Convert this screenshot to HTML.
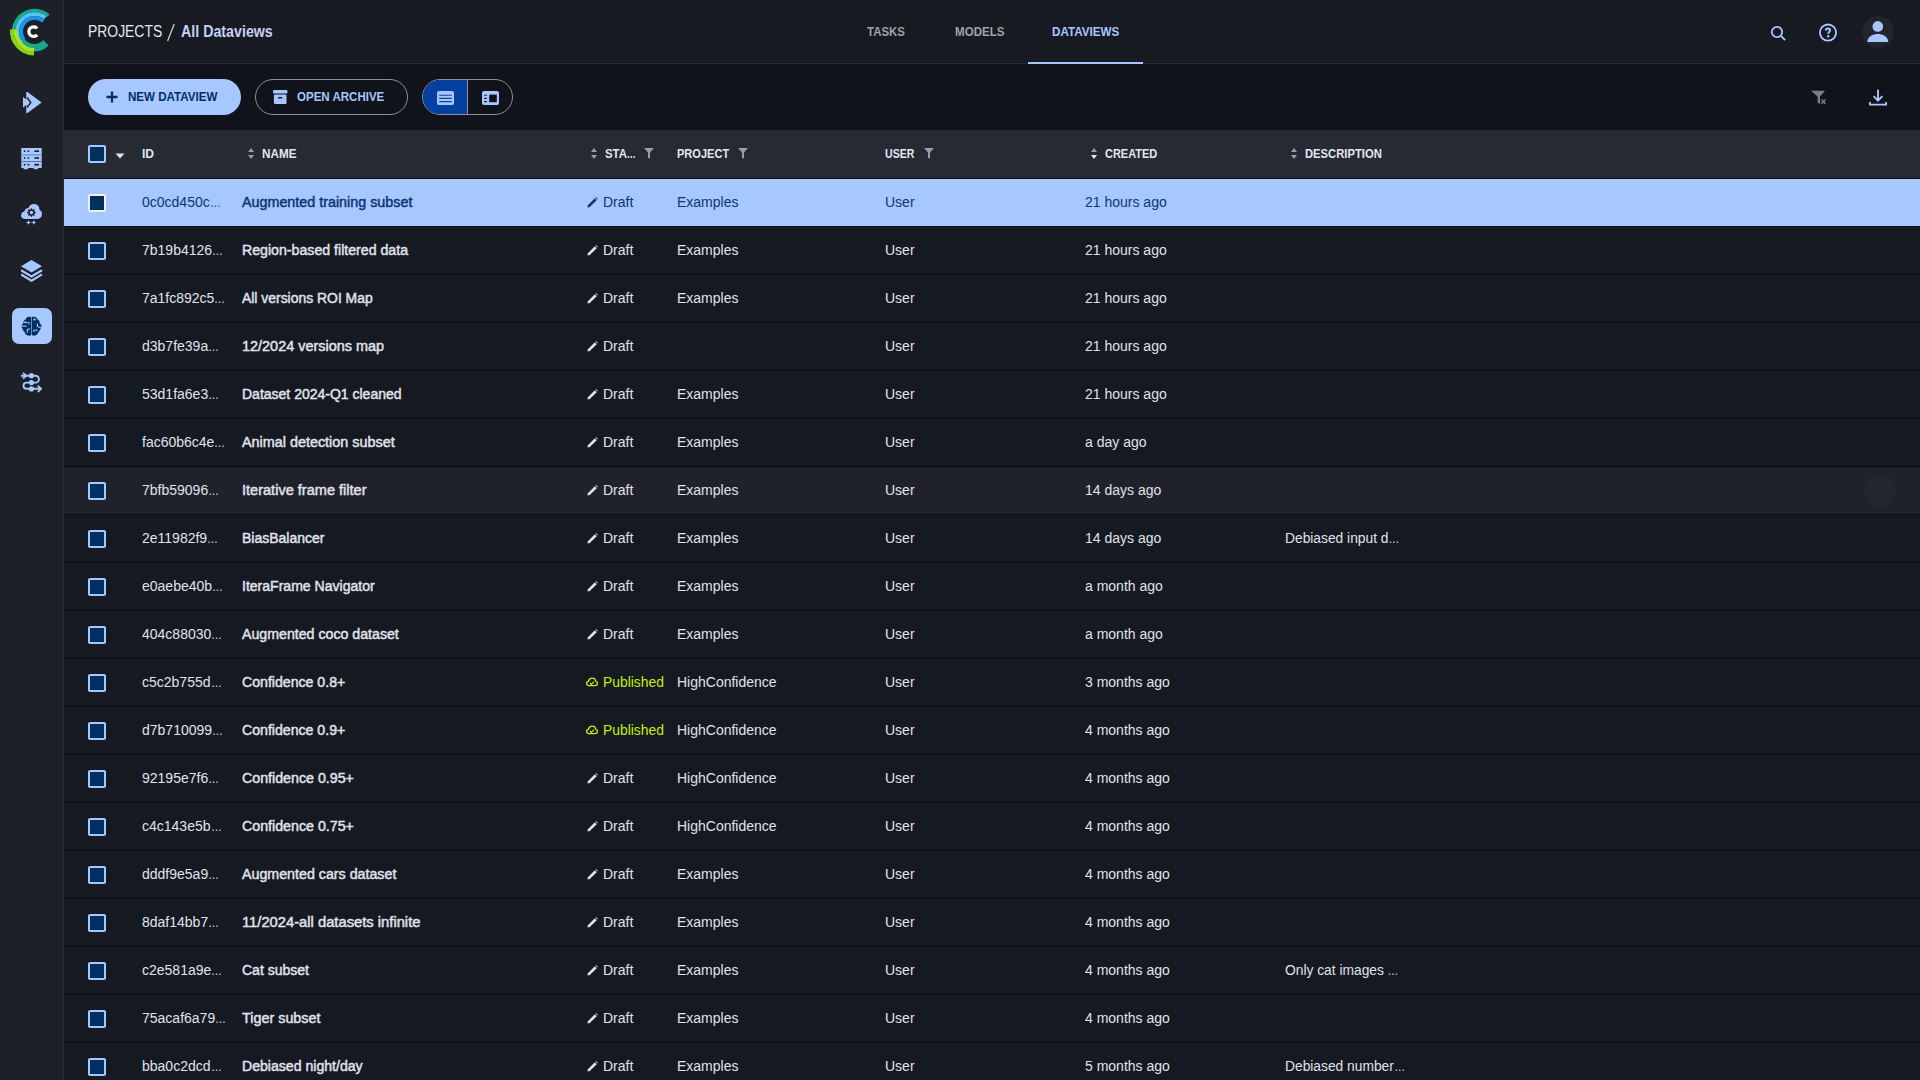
<!DOCTYPE html>
<html><head><meta charset="utf-8"><style>
*{margin:0;padding:0;box-sizing:content-box}
html,body{width:1920px;height:1080px;overflow:hidden;background:#151921;font-family:"Liberation Sans",sans-serif}
.abs{position:absolute;white-space:nowrap}
.sidebar{position:absolute;left:0;top:0;width:63px;height:1080px;background:#1d2027;border-right:1px solid #2a2d35}
.bc{font-size:15.6px;line-height:18px;color:#e6e8ee}
.bold{font-weight:bold}
.tab{font-size:12.5px;line-height:15px;font-weight:bold;color:#9fa3ab}
.tab.act{color:#a6c8ff}
.btn1{background:#a6c8ff;border-radius:18px}
.btxt{font-size:12px;line-height:14px;font-weight:bold}
.th{font-size:12px;line-height:15px;font-weight:bold;color:#e4e7ef}
.cb{width:14px;height:14px;border:2px solid;border-radius:2px}
.cell{font-size:14px;line-height:20px;color:#e0e3ec}
.nm{-webkit-text-stroke:0.45px currentColor}
.el{display:inline-block;transform:scaleX(0.78);transform-origin:0 0}
.pub{color:#c6f000}
</style></head><body>
<div class="sidebar"></div>
<svg class="abs" style="left:0;top:0" width="64" height="64" viewBox="0 0 64 64" fill="none">
<path d="M48.38 15.65A21.0 21.0 0 0 0 13.61 32.23" stroke="#16a98b" stroke-width="3.5"/>
<path d="M21.17 40.56A16.2 16.2 0 0 0 46.06 42.96" stroke="#16a98b" stroke-width="7.4"/>
<path d="M45.31 17.79A17.4 17.4 0 0 0 21.27 42.68" stroke="#57c3f6" stroke-width="3.8"/>
<path d="M43.37 21.04A13.65 13.65 0 0 0 23.56 39.52" stroke="#1797f2" stroke-width="3.7"/>
<path d="M11.96 29.32A22.7 22.7 0 0 0 34.01 53.59" stroke="#84d61d" stroke-width="3.9"/>
<path d="M15.65 29.57A19.0 19.0 0 0 0 34.10 49.89" stroke="#b0e31a" stroke-width="3.6"/>
<path d="M37.17 28.39A4.8 4.8 0 1 0 37.17 34.81" stroke="#ffffff" stroke-width="3.2"/>
</svg>

<svg class="abs" style="left:21px;top:91px" width="22" height="23" viewBox="0 0 22 23">
 <path d="M6 1.5 L19.6 11.5 L6 21.5 Z" fill="#a6c8ff" stroke="#a6c8ff" stroke-width="1.5" stroke-linejoin="round"/>
 <path d="M2 6 L8.6 11 L2 16.8 Z" fill="#a6c8ff"/>
 <path d="M6 6.5 L9.8 11.5 L6 16.5" stroke="#1d2027" stroke-width="1.4" fill="none"/>
</svg>
<svg class="abs" style="left:21px;top:148px" width="21" height="22" viewBox="0 0 21 22">
 <rect x="0.3" y="0" width="20.4" height="20" rx="0.6" fill="#a6c8ff"/>
 <rect x="0.3" y="6.1" width="20.4" height="1.5" fill="#7d9acb"/>
 <rect x="0.3" y="13" width="20.4" height="1" fill="#58729c"/>
 <rect x="2.6" y="19.6" width="4.4" height="1.6" fill="#a6c8ff"/><rect x="12.6" y="19.6" width="4.4" height="1.6" fill="#a6c8ff"/>
 <g fill="#1d2027">
 <rect x="2.8" y="2.4" width="1.6" height="1.6"/><rect x="6.6" y="2.4" width="1.6" height="1.6"/><rect x="13.4" y="2.4" width="4.6" height="1.6"/>
 <rect x="2.8" y="9.2" width="1.6" height="1.6"/><rect x="6.6" y="9.2" width="1.6" height="1.6"/><rect x="13.4" y="9.2" width="4.6" height="1.6"/>
 <rect x="2.8" y="15.8" width="1.6" height="1.8"/><rect x="6.6" y="15.8" width="1.6" height="1.8"/><rect x="13.4" y="15.8" width="4.6" height="1.8"/>
 </g>
</svg>
<svg class="abs" style="left:21px;top:203px" width="22" height="24" viewBox="0 0 22 24">
 <path d="M4.2 16 C1.6 16 0 14.4 0 12.2 C0 10.2 1.4 8.6 3.4 8.4 C3.8 6.4 5.4 5 7.4 5 C8.4 2.6 10.4 1 13 1 C16.4 1 18.6 3.6 18.6 7 C20.4 7.8 21.2 9.6 21 11.6 C20.8 14.2 18.8 16 16.6 16 Z" fill="#a6c8ff"/>
 <circle cx="10.4" cy="9.5" r="2.5" fill="none" stroke="#1d2027" stroke-width="1.5"/>
 <path d="M10.4 5.2v1.6M10.4 12.2v1.6M6.1 9.5h1.6M13.1 9.5h1.6M7.4 6.5l1 1M12.4 11.5l1 1M13.4 6.5l-1 1M8.4 11.5l-1 1" stroke="#1d2027" stroke-width="1.3"/>
 <path d="M7.5 17.2 L8.5 19 L10.3 19.5 L8.5 20 L7.5 21.8 L6.5 20 L4.7 19.5 L6.5 19 Z M12.8 17.2 L13.8 19 L15.6 19.5 L13.8 20 L12.8 21.8 L11.8 20 L10 19.5 L11.8 19 Z" fill="#a6c8ff"/>
</svg>
<svg class="abs" style="left:21px;top:260px" width="22" height="22" viewBox="0 0 22 22">
 <path d="M10.5 0 L21 6.3 L10.5 12.4 L0 6.3 Z" fill="#a6c8ff"/>
 <path d="M0 10.2 L10.5 16.4 L21 10.2" fill="none" stroke="#a6c8ff" stroke-width="2.2"/>
 <path d="M0 14.4 L10.5 20.6 L21 14.4" fill="none" stroke="#a6c8ff" stroke-width="2.2"/>
</svg>
<div class="abs" style="left:12px;top:308px;width:40px;height:36px;border-radius:7px;background:#a6c8ff"></div>
<svg class="abs" style="left:21px;top:316px" width="22" height="21" viewBox="0 0 22 21">
 <path d="M10.2 1.2 C9.4 0.6 8.4 0.6 7.4 0.8 C5.6 1.2 4.8 2.6 4.6 3.6 C3 4 2.2 5.6 2.4 7.2 C1 8 0.2 9.2 0.4 10.4 C0.4 11.2 1 12 1.6 12.6 C1.6 14.2 2.4 15.4 3.6 16 C4 17.8 5 19.2 7 19.6 C8.2 19.8 9.4 19.6 10.2 19 Z" fill="#00315e"/>
 <path d="M10.8 1.2 C11.6 0.6 12.6 0.6 13.6 0.8 C15.4 1.2 16.2 2.6 16.4 3.6 C18 4 18.8 5.6 18.6 7.2 C20 8 20.8 9.2 20.6 10.4 C20.6 11.2 20 12 19.4 12.6 C19.4 14.2 18.6 15.4 17.4 16 C17 17.8 16 19.2 14 19.6 C12.8 19.8 11.6 19.6 10.8 19 Z" fill="#00315e"/>
 <g fill="#a6c8ff">
 <rect x="0" y="9.6" width="5.6" height="1.1"/>
 <rect x="3.2" y="5.4" width="2" height="1.8"/><rect x="5.2" y="6.2" width="2.6" height="1"/><rect x="7.6" y="6.2" width="1" height="2.2"/>
 <rect x="5.8" y="13" width="1.1" height="3.6"/><rect x="6.9" y="12.4" width="2" height="1.2"/>
 <rect x="12.4" y="2.6" width="2.2" height="1.8"/>
 <rect x="15.8" y="7.6" width="1.2" height="3.4"/><rect x="17" y="10.6" width="4" height="1.1"/>
 <rect x="12.4" y="13.6" width="1.1" height="2.4"/><rect x="13.5" y="13.6" width="3.2" height="1.1"/>
 </g>
</svg>
<svg class="abs" style="left:20px;top:372px" width="23" height="21" viewBox="0 0 23 21">
 <path d="M1 3.7 H15.5 A3.45 3.45 0 0 1 15.5 10.6 H6.6 A3.1 3.1 0 0 0 6.6 16.8 H20.8" fill="none" stroke="#a6c8ff" stroke-width="1.9"/>
 <path d="M3 0.9 L6.2 3.7 L3 6.5" fill="none" stroke="#a6c8ff" stroke-width="1.9"/>
 <path d="M17.8 13.6 L21 16.8 L17.8 20" fill="none" stroke="#a6c8ff" stroke-width="1.9"/>
 <circle cx="11.4" cy="3.7" r="2.6" fill="#a6c8ff"/>
 <circle cx="11.4" cy="10.6" r="2.6" fill="#a6c8ff"/>
 <circle cx="11.4" cy="16.9" r="2.6" fill="#a6c8ff"/>
</svg>


<div class="abs" style="left:64px;top:0;width:1856px;height:63px;background:#171a21"></div>
<div class="abs" style="left:64px;top:63px;width:1856px;height:1px;background:#2b2e36"></div>
<div class="abs bc" style="left:88px;top:23px;transform:scaleX(0.8920);transform-origin:0 0;">PROJECTS</div>
<svg class="abs" style="left:166px;top:23px" width="10" height="19" viewBox="0 0 10 19"><path d="M8.2 1 L1.6 18" stroke="#c8ccd4" stroke-width="1.3"/></svg>
<div class="abs bc bold" style="left:181px;top:23px;transform:scaleX(0.9130);transform-origin:0 0;color:#c3d0f5">All Dataviews</div>
<div class="abs tab" style="left:867px;top:25px;transform:scaleX(0.9150);transform-origin:0 0;">TASKS</div>
<div class="abs tab" style="left:955px;top:25px;transform:scaleX(0.9250);transform-origin:0 0;">MODELS</div>
<div class="abs tab act" style="left:1052px;top:25px;transform:scaleX(0.9300);transform-origin:0 0;">DATAVIEWS</div>
<div class="abs" style="left:1028px;top:62px;width:115px;height:2px;background:#a6c8ff"></div>
<svg class="abs" style="left:1769px;top:24px" width="18" height="18" viewBox="0 0 18 18"><circle cx="8" cy="8" r="5.2" fill="none" stroke="#a6c8ff" stroke-width="1.8"/><path d="M11.8 11.8 L16.2 16.2" stroke="#a6c8ff" stroke-width="1.9"/></svg>
<svg class="abs" style="left:1817px;top:22px" width="22" height="22" viewBox="0 0 22 22"><circle cx="11" cy="10.6" r="8.1" fill="none" stroke="#a6c8ff" stroke-width="1.8"/><path d="M8.8 8.6 C8.8 7.2 9.8 6.5 11 6.5 C12.3 6.5 13.1 7.3 13.1 8.3 C13.1 9.7 11.2 9.9 11.2 11.8" fill="none" stroke="#a6c8ff" stroke-width="1.9"/><circle cx="11.2" cy="14.2" r="1.2" fill="#a6c8ff"/></svg>
<div class="abs" style="left:1862px;top:16px;width:32px;height:32px;border-radius:50%;background:#22252c"></div>
<svg class="abs" style="left:1867px;top:21px" width="22" height="22" viewBox="0 0 22 22"><circle cx="10.8" cy="5.4" r="5.3" fill="#a6c8ff"/><path d="M0.4 21 C0.4 15.5 6 13 10.8 13 C15.6 13 21.2 15.5 21.2 21 Z" fill="#a6c8ff"/></svg>


<div class="abs" style="left:64px;top:64px;width:1856px;height:66px;background:#10131a"></div>
<div class="abs btn1" style="left:88px;top:79px;width:153px;height:36px"></div>
<svg class="abs" style="left:106px;top:91px" width="12" height="12" viewBox="0 0 12 12"><path d="M6 0.5V11.5M0.5 6H11.5" stroke="#00315e" stroke-width="2.3"/></svg>
<div class="abs btxt" style="left:128px;top:90px;transform:scaleX(0.9650);transform-origin:0 0;color:#00315e">NEW DATAVIEW</div>
<div class="abs" style="left:255px;top:79px;width:151px;height:34px;border:1px solid #8d9199;border-radius:18px"></div>
<svg class="abs" style="left:273px;top:90px" width="15" height="14" viewBox="0 0 15 14"><rect x="0" y="0" width="14.4" height="3.6" rx="1.2" fill="#a6c8ff"/><rect x="0.9" y="4.4" width="12.6" height="9.6" rx="1.2" fill="#a6c8ff"/><rect x="5" y="7" width="4.4" height="1.4" rx="0.6" fill="#10131a"/></svg>
<div class="abs btxt" style="left:297px;top:90px;transform:scaleX(0.9600);transform-origin:0 0;color:#a6c8ff">OPEN ARCHIVE</div>
<div class="abs" style="left:422px;top:79px;width:89px;height:34px;border:1px solid #8d9199;border-radius:18px;overflow:hidden"><div style="position:absolute;left:0;top:0;width:45px;height:34px;background:#0340a2"></div><div style="position:absolute;left:44px;top:0;width:1px;height:34px;background:#8d9199"></div></div>
<svg class="abs" style="left:437px;top:91px" width="17" height="14" viewBox="0 0 17 14"><rect x="0" y="0" width="17" height="14" rx="2" fill="#a6c8ff"/><path d="M2.2 4.2H14.8M2.2 7.4H14.8M2.2 10.6H14.8" stroke="#0340a2" stroke-width="1.1"/></svg>
<svg class="abs" style="left:482px;top:91px" width="17" height="14" viewBox="0 0 17 14"><rect x="0" y="0" width="17" height="14" rx="2" fill="#a6c8ff"/><rect x="7.2" y="3.6" width="7.6" height="7.6" fill="#10131a"/><path d="M2.2 4.2H4.8M2.2 7.4H4.8M2.2 10.6H4.8" stroke="#10131a" stroke-width="1.1"/></svg>
<svg class="abs" style="left:1811px;top:90px" width="17" height="15" viewBox="0 0 17 15"><path d="M0 0.8 H14 L9 6.4 V14 L6.6 12.6 V6.4 Z" fill="#7b7e85"/><path d="M10.4 9.4 L14.6 13.8 M14.6 9.4 L10.4 13.8" stroke="#7b7e85" stroke-width="1.4"/></svg>
<svg class="abs" style="left:1869px;top:89px" width="18" height="17" viewBox="0 0 18 17"><path d="M9 0.8V11.4M4.6 7.2 L9 11.6 L13.4 7.2" fill="none" stroke="#a6c8ff" stroke-width="1.9"/><path d="M0.9 13V15.6H17.1V13" fill="none" stroke="#a6c8ff" stroke-width="1.8"/></svg>


<div class="abs" style="left:64px;top:130px;width:1856px;height:48px;background:#262a33"></div>
<div class="abs cb" style="left:88px;top:145px;border-color:#a6c8ff;background:#00315e"></div>
<svg class="abs" style="left:115px;top:153px" width="10" height="6" viewBox="0 0 10 6"><path d="M0.5 0.5 H9.5 L5 5.5 Z" fill="#e0e3ec"/></svg>
<div class="abs th" style="left:142px;top:147px;">ID</div>
<svg class="abs" style="left:248px;top:147px" width="6" height="13" viewBox="0 0 6 13"><path d="M0 5 L3 1 L6 5 Z" fill="#9a9da6"/><path d="M0 8 L3 12 L6 8 Z" fill="#9a9da6"/></svg><div class="abs th" style="left:262px;top:147px;transform:scaleX(0.9750);transform-origin:0 0;">NAME</div>
<svg class="abs" style="left:591px;top:147px" width="6" height="13" viewBox="0 0 6 13"><path d="M0 5 L3 1 L6 5 Z" fill="#9a9da6"/><path d="M0 8 L3 12 L6 8 Z" fill="#9a9da6"/></svg><div class="abs th" style="left:605px;top:147px;transform:scaleX(0.9500);transform-origin:0 0;">STA<span class="el">…</span></div><svg class="abs" style="left:644px;top:148px" width="10" height="11" viewBox="0 0 10 11"><path d="M0 0 H10 L6 4.6 V11 L4 9.4 V4.6 Z" fill="#9a9da6"/></svg>
<div class="abs th" style="left:677px;top:147px;transform:scaleX(0.9200);transform-origin:0 0;">PROJECT</div><svg class="abs" style="left:738px;top:148px" width="10" height="11" viewBox="0 0 10 11"><path d="M0 0 H10 L6 4.6 V11 L4 9.4 V4.6 Z" fill="#9a9da6"/></svg>
<div class="abs th" style="left:885px;top:147px;transform:scaleX(0.8800);transform-origin:0 0;">USER</div><svg class="abs" style="left:924px;top:148px" width="10" height="11" viewBox="0 0 10 11"><path d="M0 0 H10 L6 4.6 V11 L4 9.4 V4.6 Z" fill="#9a9da6"/></svg>
<svg class="abs" style="left:1091px;top:147px" width="6" height="13" viewBox="0 0 6 13"><path d="M0 5 L3 1 L6 5 Z" fill="#9a9da6"/><path d="M0 8 L3 12 L6 8 Z" fill="#e8eaf0"/></svg><div class="abs th" style="left:1105px;top:147px;transform:scaleX(0.9140);transform-origin:0 0;">CREATED</div>
<svg class="abs" style="left:1291px;top:147px" width="6" height="13" viewBox="0 0 6 13"><path d="M0 5 L3 1 L6 5 Z" fill="#9a9da6"/><path d="M0 8 L3 12 L6 8 Z" fill="#9a9da6"/></svg><div class="abs th" style="left:1305px;top:147px;transform:scaleX(0.9360);transform-origin:0 0;">DESCRIPTION</div>

<div class="abs" style="left:64px;top:178px;width:1856px;height:1px;background:#0a0d13"></div><div class="abs" style="left:64px;top:179px;width:1856px;height:47px;background:#a6c8ff"></div><div class="abs cb" style="left:88px;top:194px;border-color:#f3efe8;background:#00315e"></div><div class="abs cell" style="left:142px;top:192px;color:#0c3676;">0c0cd450c<span class="el">…</span></div><div class="abs cell nm" style="left:242px;top:192px;transform:scaleX(1.0229);transform-origin:0 0;color:#0c3676;">Augmented training subset</div><svg class="abs" style="left:587px;top:197px" width="11" height="11" viewBox="0 0 11 11"><path d="M0.6 10.4 L0.9 8.2 L7.8 1.3 L9.7 3.2 L2.8 10.1 Z" fill="#0c3676"/><path d="M8.4 0.7 L9 0.1 L10.9 2 L10.3 2.6 Z" fill="#0c3676"/></svg><div class="abs cell" style="left:603px;top:192px;color:#0c3676;">Draft</div><div class="abs cell" style="left:677px;top:192px;color:#0c3676;">Examples</div><div class="abs cell" style="left:885px;top:192px;color:#0c3676;">User</div><div class="abs cell" style="left:1085px;top:192px;color:#0c3676;">21 hours ago</div><div class="abs" style="left:64px;top:226px;width:1856px;height:1px;background:#0a0d13"></div><div class="abs" style="left:64px;top:227px;width:1856px;height:47px;background:#151921"></div><div class="abs cb" style="left:88px;top:242px;border-color:#a6c8ff;background:#00315e"></div><div class="abs cell" style="left:142px;top:240px;">7b19b4126<span class="el">…</span></div><div class="abs cell nm" style="left:242px;top:240px;transform:scaleX(1.0110);transform-origin:0 0;">Region-based filtered data</div><svg class="abs" style="left:587px;top:245px" width="11" height="11" viewBox="0 0 11 11"><path d="M0.6 10.4 L0.9 8.2 L7.8 1.3 L9.7 3.2 L2.8 10.1 Z" fill="#e0e3ec"/><path d="M8.4 0.7 L9 0.1 L10.9 2 L10.3 2.6 Z" fill="#e0e3ec"/></svg><div class="abs cell" style="left:603px;top:240px;">Draft</div><div class="abs cell" style="left:677px;top:240px;">Examples</div><div class="abs cell" style="left:885px;top:240px;">User</div><div class="abs cell" style="left:1085px;top:240px;">21 hours ago</div><div class="abs" style="left:64px;top:274px;width:1856px;height:1px;background:#0a0d13"></div><div class="abs" style="left:64px;top:275px;width:1856px;height:47px;background:#151921"></div><div class="abs cb" style="left:88px;top:290px;border-color:#a6c8ff;background:#00315e"></div><div class="abs cell" style="left:142px;top:288px;">7a1fc892c5<span class="el">…</span></div><div class="abs cell nm" style="left:242px;top:288px;transform:scaleX(0.9939);transform-origin:0 0;">All versions ROI Map</div><svg class="abs" style="left:587px;top:293px" width="11" height="11" viewBox="0 0 11 11"><path d="M0.6 10.4 L0.9 8.2 L7.8 1.3 L9.7 3.2 L2.8 10.1 Z" fill="#e0e3ec"/><path d="M8.4 0.7 L9 0.1 L10.9 2 L10.3 2.6 Z" fill="#e0e3ec"/></svg><div class="abs cell" style="left:603px;top:288px;">Draft</div><div class="abs cell" style="left:677px;top:288px;">Examples</div><div class="abs cell" style="left:885px;top:288px;">User</div><div class="abs cell" style="left:1085px;top:288px;">21 hours ago</div><div class="abs" style="left:64px;top:322px;width:1856px;height:1px;background:#0a0d13"></div><div class="abs" style="left:64px;top:323px;width:1856px;height:47px;background:#151921"></div><div class="abs cb" style="left:88px;top:338px;border-color:#a6c8ff;background:#00315e"></div><div class="abs cell" style="left:142px;top:336px;">d3b7fe39a<span class="el">…</span></div><div class="abs cell nm" style="left:242px;top:336px;transform:scaleX(1.0314);transform-origin:0 0;">12/2024 versions map</div><svg class="abs" style="left:587px;top:341px" width="11" height="11" viewBox="0 0 11 11"><path d="M0.6 10.4 L0.9 8.2 L7.8 1.3 L9.7 3.2 L2.8 10.1 Z" fill="#e0e3ec"/><path d="M8.4 0.7 L9 0.1 L10.9 2 L10.3 2.6 Z" fill="#e0e3ec"/></svg><div class="abs cell" style="left:603px;top:336px;">Draft</div><div class="abs cell" style="left:885px;top:336px;">User</div><div class="abs cell" style="left:1085px;top:336px;">21 hours ago</div><div class="abs" style="left:64px;top:370px;width:1856px;height:1px;background:#0a0d13"></div><div class="abs" style="left:64px;top:371px;width:1856px;height:47px;background:#151921"></div><div class="abs cb" style="left:88px;top:386px;border-color:#a6c8ff;background:#00315e"></div><div class="abs cell" style="left:142px;top:384px;">53d1fa6e3<span class="el">…</span></div><div class="abs cell nm" style="left:242px;top:384px;">Dataset 2024-Q1 cleaned</div><svg class="abs" style="left:587px;top:389px" width="11" height="11" viewBox="0 0 11 11"><path d="M0.6 10.4 L0.9 8.2 L7.8 1.3 L9.7 3.2 L2.8 10.1 Z" fill="#e0e3ec"/><path d="M8.4 0.7 L9 0.1 L10.9 2 L10.3 2.6 Z" fill="#e0e3ec"/></svg><div class="abs cell" style="left:603px;top:384px;">Draft</div><div class="abs cell" style="left:677px;top:384px;">Examples</div><div class="abs cell" style="left:885px;top:384px;">User</div><div class="abs cell" style="left:1085px;top:384px;">21 hours ago</div><div class="abs" style="left:64px;top:418px;width:1856px;height:1px;background:#0a0d13"></div><div class="abs" style="left:64px;top:419px;width:1856px;height:47px;background:#151921"></div><div class="abs cb" style="left:88px;top:434px;border-color:#a6c8ff;background:#00315e"></div><div class="abs cell" style="left:142px;top:432px;">fac60b6c4e<span class="el">…</span></div><div class="abs cell nm" style="left:242px;top:432px;transform:scaleX(1.0270);transform-origin:0 0;">Animal detection subset</div><svg class="abs" style="left:587px;top:437px" width="11" height="11" viewBox="0 0 11 11"><path d="M0.6 10.4 L0.9 8.2 L7.8 1.3 L9.7 3.2 L2.8 10.1 Z" fill="#e0e3ec"/><path d="M8.4 0.7 L9 0.1 L10.9 2 L10.3 2.6 Z" fill="#e0e3ec"/></svg><div class="abs cell" style="left:603px;top:432px;">Draft</div><div class="abs cell" style="left:677px;top:432px;">Examples</div><div class="abs cell" style="left:885px;top:432px;">User</div><div class="abs cell" style="left:1085px;top:432px;">a day ago</div><div class="abs" style="left:64px;top:466px;width:1856px;height:1px;background:#0a0d13"></div><div class="abs" style="left:64px;top:467px;width:1856px;height:47px;background:#1f222a"></div><div class="abs" style="left:1864px;top:475px;width:32px;height:32px;border-radius:50%;background:#23262d"></div><div class="abs" style="left:1879px;top:486px;width:2px;height:2px;border-radius:1px;background:#1c1e24"></div><div class="abs" style="left:1879px;top:490px;width:2px;height:2px;border-radius:1px;background:#1c1e24"></div><div class="abs" style="left:1879px;top:494px;width:2px;height:2px;border-radius:1px;background:#1c1e24"></div><div class="abs cb" style="left:88px;top:482px;border-color:#a6c8ff;background:#00315e"></div><div class="abs cell" style="left:142px;top:480px;">7bfb59096<span class="el">…</span></div><div class="abs cell nm" style="left:242px;top:480px;transform:scaleX(1.0392);transform-origin:0 0;">Iterative frame filter</div><svg class="abs" style="left:587px;top:485px" width="11" height="11" viewBox="0 0 11 11"><path d="M0.6 10.4 L0.9 8.2 L7.8 1.3 L9.7 3.2 L2.8 10.1 Z" fill="#e0e3ec"/><path d="M8.4 0.7 L9 0.1 L10.9 2 L10.3 2.6 Z" fill="#e0e3ec"/></svg><div class="abs cell" style="left:603px;top:480px;">Draft</div><div class="abs cell" style="left:677px;top:480px;">Examples</div><div class="abs cell" style="left:885px;top:480px;">User</div><div class="abs cell" style="left:1085px;top:480px;">14 days ago</div><div class="abs" style="left:64px;top:514px;width:1856px;height:1px;background:#0a0d13"></div><div class="abs" style="left:64px;top:515px;width:1856px;height:47px;background:#151921"></div><div class="abs cb" style="left:88px;top:530px;border-color:#a6c8ff;background:#00315e"></div><div class="abs cell" style="left:142px;top:528px;">2e11982f9<span class="el">…</span></div><div class="abs cell nm" style="left:242px;top:528px;">BiasBalancer</div><svg class="abs" style="left:587px;top:533px" width="11" height="11" viewBox="0 0 11 11"><path d="M0.6 10.4 L0.9 8.2 L7.8 1.3 L9.7 3.2 L2.8 10.1 Z" fill="#e0e3ec"/><path d="M8.4 0.7 L9 0.1 L10.9 2 L10.3 2.6 Z" fill="#e0e3ec"/></svg><div class="abs cell" style="left:603px;top:528px;">Draft</div><div class="abs cell" style="left:677px;top:528px;">Examples</div><div class="abs cell" style="left:885px;top:528px;">User</div><div class="abs cell" style="left:1085px;top:528px;">14 days ago</div><div class="abs cell" style="left:1285px;top:528px;transform:scaleX(0.9850);transform-origin:0 0;">Debiased input d<span class="el">…</span></div><div class="abs" style="left:64px;top:562px;width:1856px;height:1px;background:#0a0d13"></div><div class="abs" style="left:64px;top:563px;width:1856px;height:47px;background:#151921"></div><div class="abs cb" style="left:88px;top:578px;border-color:#a6c8ff;background:#00315e"></div><div class="abs cell" style="left:142px;top:576px;">e0aebe40b<span class="el">…</span></div><div class="abs cell nm" style="left:242px;top:576px;transform:scaleX(1.0030);transform-origin:0 0;">IteraFrame Navigator</div><svg class="abs" style="left:587px;top:581px" width="11" height="11" viewBox="0 0 11 11"><path d="M0.6 10.4 L0.9 8.2 L7.8 1.3 L9.7 3.2 L2.8 10.1 Z" fill="#e0e3ec"/><path d="M8.4 0.7 L9 0.1 L10.9 2 L10.3 2.6 Z" fill="#e0e3ec"/></svg><div class="abs cell" style="left:603px;top:576px;">Draft</div><div class="abs cell" style="left:677px;top:576px;">Examples</div><div class="abs cell" style="left:885px;top:576px;">User</div><div class="abs cell" style="left:1085px;top:576px;">a month ago</div><div class="abs" style="left:64px;top:610px;width:1856px;height:1px;background:#0a0d13"></div><div class="abs" style="left:64px;top:611px;width:1856px;height:47px;background:#151921"></div><div class="abs cb" style="left:88px;top:626px;border-color:#a6c8ff;background:#00315e"></div><div class="abs cell" style="left:142px;top:624px;">404c88030<span class="el">…</span></div><div class="abs cell nm" style="left:242px;top:624px;transform:scaleX(1.0123);transform-origin:0 0;">Augmented coco dataset</div><svg class="abs" style="left:587px;top:629px" width="11" height="11" viewBox="0 0 11 11"><path d="M0.6 10.4 L0.9 8.2 L7.8 1.3 L9.7 3.2 L2.8 10.1 Z" fill="#e0e3ec"/><path d="M8.4 0.7 L9 0.1 L10.9 2 L10.3 2.6 Z" fill="#e0e3ec"/></svg><div class="abs cell" style="left:603px;top:624px;">Draft</div><div class="abs cell" style="left:677px;top:624px;">Examples</div><div class="abs cell" style="left:885px;top:624px;">User</div><div class="abs cell" style="left:1085px;top:624px;">a month ago</div><div class="abs" style="left:64px;top:658px;width:1856px;height:1px;background:#0a0d13"></div><div class="abs" style="left:64px;top:659px;width:1856px;height:47px;background:#151921"></div><div class="abs cb" style="left:88px;top:674px;border-color:#a6c8ff;background:#00315e"></div><div class="abs cell" style="left:142px;top:672px;">c5c2b755d<span class="el">…</span></div><div class="abs cell nm" style="left:242px;top:672px;transform:scaleX(1.0088);transform-origin:0 0;">Confidence 0.8+</div><svg class="abs" style="left:586px;top:677px" width="12" height="10" viewBox="0 0 12 10"><path d="M3 8.6 C1.3 8.6 0.6 7.5 0.6 6.4 C0.6 5.3 1.4 4.5 2.4 4.4 C2.8 2.5 4.3 1.2 6.2 1.2 C8 1.2 9.4 2.4 9.7 4.1 C10.8 4.3 11.4 5.2 11.4 6.3 C11.4 7.6 10.4 8.6 9.2 8.6 Z" fill="none" stroke="#c6f000" stroke-width="1.3"/><path d="M4 6 L5.4 7.3 L8 4.6" fill="none" stroke="#c6f000" stroke-width="1.2"/></svg><div class="abs cell pub" style="left:603px;top:672px;transform:scaleX(0.9900);transform-origin:0 0;">Published</div><div class="abs cell" style="left:677px;top:672px;">HighConfidence</div><div class="abs cell" style="left:885px;top:672px;">User</div><div class="abs cell" style="left:1085px;top:672px;">3 months ago</div><div class="abs" style="left:64px;top:706px;width:1856px;height:1px;background:#0a0d13"></div><div class="abs" style="left:64px;top:707px;width:1856px;height:47px;background:#151921"></div><div class="abs cb" style="left:88px;top:722px;border-color:#a6c8ff;background:#00315e"></div><div class="abs cell" style="left:142px;top:720px;">d7b710099<span class="el">…</span></div><div class="abs cell nm" style="left:242px;top:720px;transform:scaleX(1.0088);transform-origin:0 0;">Confidence 0.9+</div><svg class="abs" style="left:586px;top:725px" width="12" height="10" viewBox="0 0 12 10"><path d="M3 8.6 C1.3 8.6 0.6 7.5 0.6 6.4 C0.6 5.3 1.4 4.5 2.4 4.4 C2.8 2.5 4.3 1.2 6.2 1.2 C8 1.2 9.4 2.4 9.7 4.1 C10.8 4.3 11.4 5.2 11.4 6.3 C11.4 7.6 10.4 8.6 9.2 8.6 Z" fill="none" stroke="#c6f000" stroke-width="1.3"/><path d="M4 6 L5.4 7.3 L8 4.6" fill="none" stroke="#c6f000" stroke-width="1.2"/></svg><div class="abs cell pub" style="left:603px;top:720px;transform:scaleX(0.9900);transform-origin:0 0;">Published</div><div class="abs cell" style="left:677px;top:720px;">HighConfidence</div><div class="abs cell" style="left:885px;top:720px;">User</div><div class="abs cell" style="left:1085px;top:720px;">4 months ago</div><div class="abs" style="left:64px;top:754px;width:1856px;height:1px;background:#0a0d13"></div><div class="abs" style="left:64px;top:755px;width:1856px;height:47px;background:#151921"></div><div class="abs cb" style="left:88px;top:770px;border-color:#a6c8ff;background:#00315e"></div><div class="abs cell" style="left:142px;top:768px;">92195e7f6<span class="el">…</span></div><div class="abs cell nm" style="left:242px;top:768px;transform:scaleX(1.0156);transform-origin:0 0;">Confidence 0.95+</div><svg class="abs" style="left:587px;top:773px" width="11" height="11" viewBox="0 0 11 11"><path d="M0.6 10.4 L0.9 8.2 L7.8 1.3 L9.7 3.2 L2.8 10.1 Z" fill="#e0e3ec"/><path d="M8.4 0.7 L9 0.1 L10.9 2 L10.3 2.6 Z" fill="#e0e3ec"/></svg><div class="abs cell" style="left:603px;top:768px;">Draft</div><div class="abs cell" style="left:677px;top:768px;">HighConfidence</div><div class="abs cell" style="left:885px;top:768px;">User</div><div class="abs cell" style="left:1085px;top:768px;">4 months ago</div><div class="abs" style="left:64px;top:802px;width:1856px;height:1px;background:#0a0d13"></div><div class="abs" style="left:64px;top:803px;width:1856px;height:47px;background:#151921"></div><div class="abs cb" style="left:88px;top:818px;border-color:#a6c8ff;background:#00315e"></div><div class="abs cell" style="left:142px;top:816px;">c4c143e5b<span class="el">…</span></div><div class="abs cell nm" style="left:242px;top:816px;transform:scaleX(1.0156);transform-origin:0 0;">Confidence 0.75+</div><svg class="abs" style="left:587px;top:821px" width="11" height="11" viewBox="0 0 11 11"><path d="M0.6 10.4 L0.9 8.2 L7.8 1.3 L9.7 3.2 L2.8 10.1 Z" fill="#e0e3ec"/><path d="M8.4 0.7 L9 0.1 L10.9 2 L10.3 2.6 Z" fill="#e0e3ec"/></svg><div class="abs cell" style="left:603px;top:816px;">Draft</div><div class="abs cell" style="left:677px;top:816px;">HighConfidence</div><div class="abs cell" style="left:885px;top:816px;">User</div><div class="abs cell" style="left:1085px;top:816px;">4 months ago</div><div class="abs" style="left:64px;top:850px;width:1856px;height:1px;background:#0a0d13"></div><div class="abs" style="left:64px;top:851px;width:1856px;height:47px;background:#151921"></div><div class="abs cb" style="left:88px;top:866px;border-color:#a6c8ff;background:#00315e"></div><div class="abs cell" style="left:142px;top:864px;">dddf9e5a9<span class="el">…</span></div><div class="abs cell nm" style="left:242px;top:864px;transform:scaleX(1.0172);transform-origin:0 0;">Augmented cars dataset</div><svg class="abs" style="left:587px;top:869px" width="11" height="11" viewBox="0 0 11 11"><path d="M0.6 10.4 L0.9 8.2 L7.8 1.3 L9.7 3.2 L2.8 10.1 Z" fill="#e0e3ec"/><path d="M8.4 0.7 L9 0.1 L10.9 2 L10.3 2.6 Z" fill="#e0e3ec"/></svg><div class="abs cell" style="left:603px;top:864px;">Draft</div><div class="abs cell" style="left:677px;top:864px;">Examples</div><div class="abs cell" style="left:885px;top:864px;">User</div><div class="abs cell" style="left:1085px;top:864px;">4 months ago</div><div class="abs" style="left:64px;top:898px;width:1856px;height:1px;background:#0a0d13"></div><div class="abs" style="left:64px;top:899px;width:1856px;height:47px;background:#151921"></div><div class="abs cb" style="left:88px;top:914px;border-color:#a6c8ff;background:#00315e"></div><div class="abs cell" style="left:142px;top:912px;">8daf14bb7<span class="el">…</span></div><div class="abs cell nm" style="left:242px;top:912px;transform:scaleX(1.0533);transform-origin:0 0;">11/2024-all datasets infinite</div><svg class="abs" style="left:587px;top:917px" width="11" height="11" viewBox="0 0 11 11"><path d="M0.6 10.4 L0.9 8.2 L7.8 1.3 L9.7 3.2 L2.8 10.1 Z" fill="#e0e3ec"/><path d="M8.4 0.7 L9 0.1 L10.9 2 L10.3 2.6 Z" fill="#e0e3ec"/></svg><div class="abs cell" style="left:603px;top:912px;">Draft</div><div class="abs cell" style="left:677px;top:912px;">Examples</div><div class="abs cell" style="left:885px;top:912px;">User</div><div class="abs cell" style="left:1085px;top:912px;">4 months ago</div><div class="abs" style="left:64px;top:946px;width:1856px;height:1px;background:#0a0d13"></div><div class="abs" style="left:64px;top:947px;width:1856px;height:47px;background:#151921"></div><div class="abs cb" style="left:88px;top:962px;border-color:#a6c8ff;background:#00315e"></div><div class="abs cell" style="left:142px;top:960px;">c2e581a9e<span class="el">…</span></div><div class="abs cell nm" style="left:242px;top:960px;">Cat subset</div><svg class="abs" style="left:587px;top:965px" width="11" height="11" viewBox="0 0 11 11"><path d="M0.6 10.4 L0.9 8.2 L7.8 1.3 L9.7 3.2 L2.8 10.1 Z" fill="#e0e3ec"/><path d="M8.4 0.7 L9 0.1 L10.9 2 L10.3 2.6 Z" fill="#e0e3ec"/></svg><div class="abs cell" style="left:603px;top:960px;">Draft</div><div class="abs cell" style="left:677px;top:960px;">Examples</div><div class="abs cell" style="left:885px;top:960px;">User</div><div class="abs cell" style="left:1085px;top:960px;">4 months ago</div><div class="abs cell" style="left:1285px;top:960px;transform:scaleX(0.9850);transform-origin:0 0;">Only cat images <span class="el">…</span></div><div class="abs" style="left:64px;top:994px;width:1856px;height:1px;background:#0a0d13"></div><div class="abs" style="left:64px;top:995px;width:1856px;height:47px;background:#151921"></div><div class="abs cb" style="left:88px;top:1010px;border-color:#a6c8ff;background:#00315e"></div><div class="abs cell" style="left:142px;top:1008px;">75acaf6a79<span class="el">…</span></div><div class="abs cell nm" style="left:242px;top:1008px;transform:scaleX(1.0263);transform-origin:0 0;">Tiger subset</div><svg class="abs" style="left:587px;top:1013px" width="11" height="11" viewBox="0 0 11 11"><path d="M0.6 10.4 L0.9 8.2 L7.8 1.3 L9.7 3.2 L2.8 10.1 Z" fill="#e0e3ec"/><path d="M8.4 0.7 L9 0.1 L10.9 2 L10.3 2.6 Z" fill="#e0e3ec"/></svg><div class="abs cell" style="left:603px;top:1008px;">Draft</div><div class="abs cell" style="left:677px;top:1008px;">Examples</div><div class="abs cell" style="left:885px;top:1008px;">User</div><div class="abs cell" style="left:1085px;top:1008px;">4 months ago</div><div class="abs" style="left:64px;top:1042px;width:1856px;height:1px;background:#0a0d13"></div><div class="abs" style="left:64px;top:1043px;width:1856px;height:47px;background:#151921"></div><div class="abs cb" style="left:88px;top:1058px;border-color:#a6c8ff;background:#00315e"></div><div class="abs cell" style="left:142px;top:1056px;">bba0c2dcd<span class="el">…</span></div><div class="abs cell nm" style="left:242px;top:1056px;transform:scaleX(1.0067);transform-origin:0 0;">Debiased night/day</div><svg class="abs" style="left:587px;top:1061px" width="11" height="11" viewBox="0 0 11 11"><path d="M0.6 10.4 L0.9 8.2 L7.8 1.3 L9.7 3.2 L2.8 10.1 Z" fill="#e0e3ec"/><path d="M8.4 0.7 L9 0.1 L10.9 2 L10.3 2.6 Z" fill="#e0e3ec"/></svg><div class="abs cell" style="left:603px;top:1056px;">Draft</div><div class="abs cell" style="left:677px;top:1056px;">Examples</div><div class="abs cell" style="left:885px;top:1056px;">User</div><div class="abs cell" style="left:1085px;top:1056px;">5 months ago</div><div class="abs cell" style="left:1285px;top:1056px;transform:scaleX(0.9850);transform-origin:0 0;">Debiased number<span class="el">…</span></div>
</body></html>
